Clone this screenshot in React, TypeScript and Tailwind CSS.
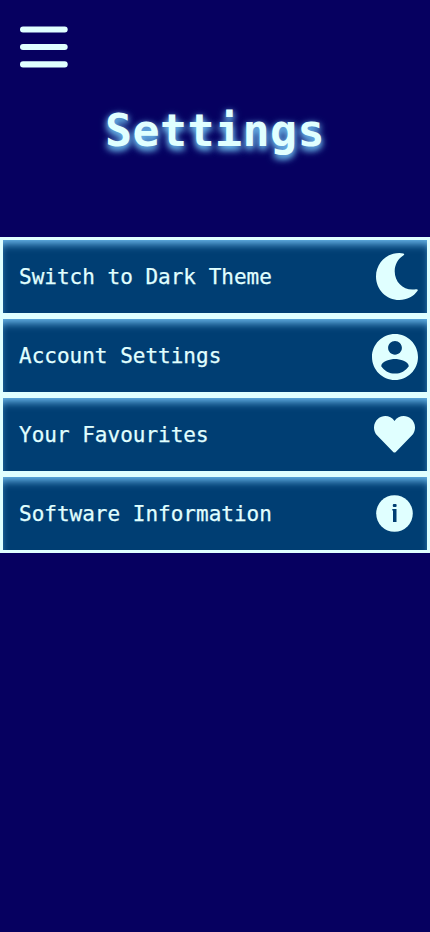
import type { ReactNode } from "react";

function MoonIcon() {
  return (
    <svg className="mr-[9px] h-[47px] w-[42px]" viewBox="0 0 42 47" fill="currentColor">
      <path d="M23.3 0Q25.6 0 27.4 .4Q29 1.1 27.6 2.2C22 5.6 18.7 11.5 18.7 18.2C18.7 28.6 26.5 36.6 36.4 36.6Q38.4 36.6 40 36.2Q42.4 36 41.6 37.8C37.4 43.6 31 47 23.3 47C10.3 47 0 36.5 0 23.5S10.3 0 23.3 0Z" />
    </svg>
  );
}

function AccountIcon() {
  return (
    <svg className="mt-[2px] mr-[9px] size-[46px]" viewBox="2 2 20 20" fill="currentColor">
      <path d="M12 2C6.48 2 2 6.48 2 12s4.48 10 10 10 10-4.48 10-10S17.52 2 12 2zm0 3c1.66 0 3 1.34 3 3s-1.34 3-3 3-3-1.34-3-3 1.34-3 3-3zm0 14.2c-2.5 0-4.71-1.28-6-3.22.03-1.99 4-3.08 6-3.08 1.99 0 5.97 1.09 6 3.08-1.29 1.94-3.5 3.22-6 3.22z" />
    </svg>
  );
}

function HeartIcon() {
  return (
    <svg className="mr-[12px] h-[37px] w-[41px]" viewBox="0 0 41 37" fill="currentColor">
      <path d="M20.5 5C16.8 -.6 9 -1.6 4 2.8C-1.2 7.4 -1.2 14.8 3.2 19.6L19.2 36Q20.5 37.2 21.8 36L37.8 19.6C42.2 14.8 42.2 7.4 37 2.8C32 -1.6 24.2 -.6 20.5 5Z" />
    </svg>
  );
}

function InfoIcon() {
  return (
    <svg className="mr-[14px] size-[37px]" viewBox="0 0 37 37">
      <circle cx="18.5" cy="18.5" r="18.3" fill="currentColor" />
      <g fill="#003e73">
        <rect x="16.8" y="8.9" width="3.8" height="3" rx="1" />
        <path d="M16.3 14h4.2v13h-3.5V15.4h-.7z" />
      </g>
    </svg>
  );
}

function Row({ label, children }: { label: string; children: ReactNode }) {
  return (
    <button className="flex h-[79px] w-full items-center justify-between border-[3px] border-[#e0ffff] bg-[#003e73] pl-4 text-left text-[21px] shadow-[inset_0_7px_8px_-3px_#6bb9ec]">
      <span className="pt-[2px] whitespace-pre [-webkit-text-stroke:0.25px_#e0ffff]">{label}</span>
      {children}
    </button>
  );
}

export default function App() {
  return (
    <main className="h-screen overflow-hidden bg-[#060060] font-['DejaVu_Sans_Mono',monospace] text-[#e0ffff]">
      <header className="h-[237px] pt-[26px]">
        <svg className="ml-5 h-[42px] w-12" viewBox="0 0 48 42" fill="currentColor">
          <rect y="0.4" width="47.7" height="6.2" rx="3" />
          <rect y="17.9" width="47.7" height="6.2" rx="3" />
          <rect y="35.3" width="47.7" height="6.2" rx="3" />
        </svg>
        <h1 className="mt-[35px] text-center text-[45px] leading-[56px] font-bold tracking-[0.4px] [text-shadow:0_3px_8px_#6bb9ec,0_3px_6px_#6bb9ec]">
          Settings
        </h1>
      </header>
      <nav>
        <Row label="Switch to Dark Theme"><MoonIcon /></Row>
        <Row label="Account Settings"><AccountIcon /></Row>
        <Row label="Your Favourites"><HeartIcon /></Row>
        <Row label="Software Information"><InfoIcon /></Row>
      </nav>
    </main>
  );
}
